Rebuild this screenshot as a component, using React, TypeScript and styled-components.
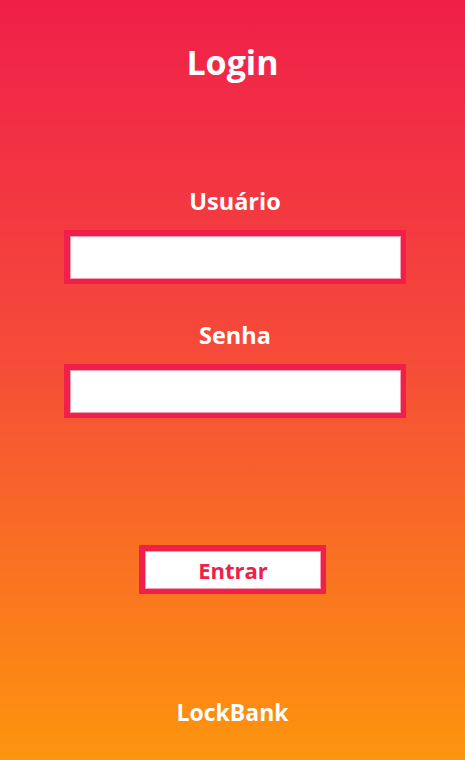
import React from "react";
import styled, { createGlobalStyle } from "styled-components";

const Global = createGlobalStyle`
  html, body { margin: 0; padding: 0; }
  body { font-family: "Open Sans", "Noto Sans", sans-serif; }
  * { box-sizing: border-box; }
`;

const Page = styled.div`
  width: 465px;
  height: 760px;
  background: linear-gradient(180deg, #f01f4a 0%, #f5493a 45%, #fd950d 100%);
  display: flex;
  flex-direction: column;
  align-items: center;
  padding-top: 42px;
  color: #fff;
  font-weight: 700;
  overflow: hidden;
`;

const Title = styled.h1`
  margin: 0;
  font-size: 34px;
  line-height: 40px;
  font-weight: 700;
`;

const Form = styled.form`
  display: flex;
  flex-direction: column;
  align-items: center;
  margin-top: 104px;
  padding-left: 5px;
`;

const Label = styled.label<{ $top?: number }>`
  font-size: 23.5px;
  line-height: 30px;
  margin-top: ${(p) => p.$top ?? 0}px;
`;

const Input = styled.input`
  width: 342px;
  height: 54px;
  margin-top: 14px;
  border: 6px solid #f0204a;
  border-right-width: 5px;
  border-bottom-width: 5px;
  background: #fff;
  outline: none;
  box-shadow: inset 0 0 0 1px #f6a0b4;
  font-family: inherit;
  font-size: 18px;
  padding: 0 8px;
`;

const Button = styled.button`
  margin-top: 127px;
  margin-right: 5px;
  width: 187px;
  height: 49px;
  border: 6px solid #f0204a;
  border-right-width: 5px;
  border-bottom-width: 5px;
  background: #fff;
  color: #f0204a;
  font-family: inherit;
  font-weight: 700;
  font-size: 22px;
  line-height: 1;
  box-shadow: inset 0 0 0 1px #f6a0b4;
  padding: 0;
  cursor: pointer;
`;

const Footer = styled.div`
  margin-top: 103px;
  font-size: 23px;
  line-height: 30px;
`;

export default function App() {
  return (
    <>
      <Global />
      <Page>
        <Title>Login</Title>
        <Form onSubmit={(e) => e.preventDefault()}>
          <Label htmlFor="user">Usuário</Label>
          <Input id="user" type="text" />
          <Label htmlFor="pass" $top={36}>Senha</Label>
          <Input id="pass" type="password" />
          <Button type="submit">Entrar</Button>
        </Form>
        <Footer>LockBank</Footer>
      </Page>
    </>
  );
}
